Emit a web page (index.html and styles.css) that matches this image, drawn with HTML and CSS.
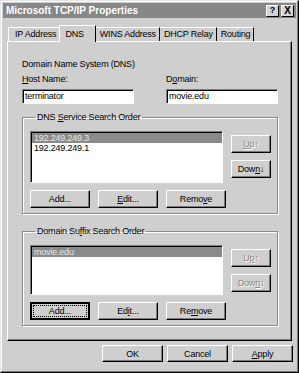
FILE: index.html
```html
<!DOCTYPE html>
<html lang="en">
<head>
    <meta charset="UTF-8">
    <title>Microsoft TCP/IP Properties</title>
    <link rel="stylesheet" href="styles.css">
</head>
<body>
    <div class="dialog">
        <div class="titlebar">
            <span class="title">Microsoft TCP/IP Properties</span>
            <div class="title-buttons">
                <span class="tbtn">?</span>
                <span class="tbtn close">X</span>
            </div>
        </div>

        <div class="tabs">
            <span class="tab first">IP Address</span>
            <span class="tab active">DNS</span>
            <span class="tab">WINS Address</span>
            <span class="tab">DHCP Relay</span>
            <span class="tab">Routing</span>
        </div>

        <div class="panel">
            <div class="section-title">Domain Name System (DNS)</div>
            <div class="host-row">
                <div class="field">
                    <label><u>H</u>ost Name:</label>
                    <div class="textbox">terminator</div>
                </div>
                <div class="field">
                    <label>D<u>o</u>main:</label>
                    <div class="textbox">movie.edu</div>
                </div>
            </div>

            <fieldset class="group first-group">
                <legend>DNS <u>S</u>ervice Search Order</legend>
                <div class="group-body">
                    <div class="listbox tall">
                        <div class="item selected">192.249.249.3</div>
                        <div class="item">192.249.249.1</div>
                    </div>
                    <div class="updown">
                        <button class="btn small disabled"><u>U</u>p&#8593;</button>
                        <button class="btn small">Dow<u>n</u>&#8595;</button>
                    </div>
                </div>
                <div class="btn-row">
                    <button class="btn">Add...</button>
                    <button class="btn"><u>E</u>dit...</button>
                    <button class="btn">Remo<u>v</u>e</button>
                </div>
            </fieldset>

            <fieldset class="group second-group">
                <legend>Domain Su<u>f</u>fix Search Order</legend>
                <div class="group-body">
                    <div class="listbox">
                        <div class="item selected">movie.edu</div>
                    </div>
                    <div class="updown">
                        <button class="btn small disabled">U<u>p</u>&#8593;</button>
                        <button class="btn small disabled">Dow<u>n</u>&#8595;</button>
                    </div>
                </div>
                <div class="btn-row">
                    <button class="btn focused"><span class="focus-ring">Add...</span></button>
                    <button class="btn">Ed<u>i</u>t...</button>
                    <button class="btn">Re<u>m</u>ove</button>
                </div>
            </fieldset>
        </div>

        <div class="dialog-buttons">
            <button class="btn wide">OK</button>
            <button class="btn wide">Cancel</button>
            <button class="btn wide"><u>A</u>pply</button>
        </div>
    </div>
</body>
</html>
```
FILE: styles.css
```css
* {
    margin: 0;
    padding: 0;
    box-sizing: border-box;
}

body {
    background: #cfcfcf;
    font-family: "Liberation Sans", Arial, sans-serif;
    font-size: 9px;
    letter-spacing: -0.2px;
    color: #000;
}

.dialog {
    width: 299px;
    height: 373px;
    background: #cfcfcf;
    border: 1px solid;
    border-color: #e6e6e6 #000 #000 #e6e6e6;
    box-shadow: inset -1px -1px 0 #7c7c7c, inset 1px 1px 0 #fff;
}

/* title bar */
.titlebar {
    margin: 2px 2px 0;
    height: 15px;
    background: #878787;
    display: flex;
    align-items: center;
    justify-content: space-between;
    padding: 0 2px 0 3px;
}

.title {
    color: #fff;
    font-weight: bold;
    font-size: 10px;
    letter-spacing: 0;
}

.title-buttons {
    display: flex;
    gap: 2px;
}

.tbtn {
    width: 13px;
    height: 12px;
    background: #d4d4d4;
    border: 1px solid;
    border-color: #fff #000 #000 #fff;
    display: flex;
    align-items: center;
    justify-content: center;
    font-weight: bold;
    font-size: 9px;
    line-height: 1;
}

.tbtn.close {
    font-size: 10px;
}

/* tabs */
.tabs {
    display: flex;
    align-items: flex-end;
    margin: 6px 0 0 7px;
    height: 17px;
}

.tab {
    height: 14px;
    line-height: 12px;
    padding: 0 3px 0 4px;
    border-top: 1px solid #fff;
    border-right: 1px solid #000;
}

.tab.first {
    padding-left: 6px;
    padding-right: 3px;
    border-left: 1px solid #fff;
    border-right: none;
}

.tab.active {
    height: 17px;
    padding: 2px 11px 0 5px;
    border-left: 1px solid #fff;
    position: relative;
    top: 1px;
    background: #cfcfcf;
}

/* tab page */
.panel {
    margin: 0 6px;
    height: 300px;
    border: 1px solid;
    border-color: #fff #000 #000 #fff;
    box-shadow: inset -1px -1px 0 #7c7c7c;
    padding: 16px 0 0 14px;
}

.section-title {
    line-height: 12px;
}

.host-row {
    display: flex;
    gap: 32px;
    margin-top: 3px;
}

.field label {
    display: block;
    line-height: 12px;
}

.textbox {
    margin-top: 4px;
    width: 112px;
    height: 15px;
    background: #fff;
    border: 1px solid;
    border-color: #7c7c7c #fff #fff #7c7c7c;
    box-shadow: inset 1px 1px 0 #000;
    padding-left: 2px;
    line-height: 13px;
}

/* group boxes */
.group {
    width: 256px;
    border: 1px solid #8a8a8a;
    box-shadow: inset 1px 1px 0 #fff, 1px 1px 0 #fff;
    padding: 8px 5px 5px 7px;
}

.first-group {
    margin-top: 7px;
}

.second-group {
    margin-top: 11px;
}

.group legend {
    margin-left: 5px;
    padding: 0 2px;
    line-height: 12px;
}

.group-body {
    display: flex;
    gap: 8px;
}

.listbox {
    width: 193px;
    height: 50px;
    background: #fff;
    border: 1px solid;
    border-color: #7c7c7c #fff #fff #7c7c7c;
    box-shadow: inset 1px 1px 0 #000;
    padding: 1px 0 0 1px;
}

.listbox.tall {
    height: 52px;
}

.item {
    line-height: 10px;
    padding-left: 2px;
}

.item.selected {
    background: #8a8a8a;
    color: #e8e8e8;
}

.updown {
    display: flex;
    flex-direction: column;
    gap: 7px;
    padding-top: 4px;
}

/* buttons */
.btn {
    font: inherit;
    letter-spacing: inherit;
    color: #000;
    width: 60px;
    height: 18px;
    background: #cfcfcf;
    border: 1px solid;
    border-color: #fff #000 #000 #fff;
    box-shadow: inset -1px -1px 0 #7c7c7c;
    text-align: center;
    line-height: 14px;
}

.btn.small {
    width: 40px;
}

.btn.disabled {
    color: #8a8a8a;
    text-shadow: 1px 1px 0 #fff;
}

.btn.focused {
    border: 2px solid #000;
    box-shadow: none;
    padding: 1px;
}

.focus-ring {
    display: block;
    height: 12px;
    line-height: 11px;
    border: 1px dotted #000;
}

.btn-row {
    display: flex;
    gap: 8px;
    margin-top: 7px;
}

.dialog-buttons {
    display: flex;
    justify-content: flex-end;
    gap: 4px;
    margin: 4px 5px 0 0;
}

.btn.wide {
    width: 61px;
    height: 17px;
}
```
